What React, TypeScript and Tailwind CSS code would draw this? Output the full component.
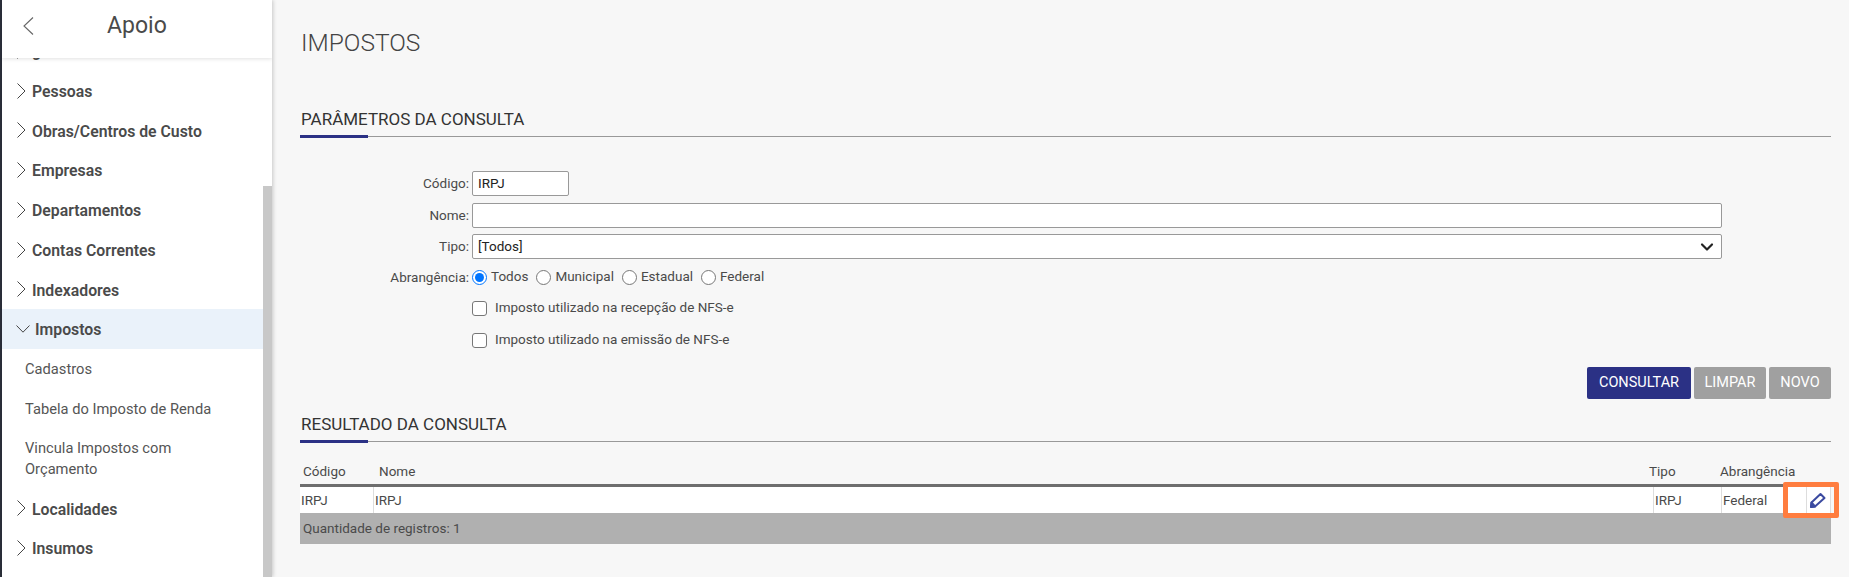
import type { ReactNode } from "react";
import { ChevronDown } from "lucide-react";

const before = ["geral", "Pessoas", "Obras/Centros de Custo", "Empresas", "Departamentos", "Contas Correntes", "Indexadores"];
const children = ["Cadastros", "Tabela do Imposto de Renda"];
const after = ["Localidades", "Insumos"];

function MenuItem({ label }: { label: string }) {
  return (
    <div className="flex h-[39.75px] items-center gap-[6px] pl-[15px] text-[15.8px] font-semibold text-[#4a4a4a]">
      <svg width="9" height="16" viewBox="0 0 9 16" fill="none" stroke="#444" strokeWidth="1" className="shrink-0">
        <path d="M0.5 0.5L8 8L0.5 15.5" />
      </svg>
      <span className="mt-[2px]">{label}</span>
    </div>
  );
}

function SectionTitle({ title }: { title: string }) {
  return (
    <div className="relative border-b border-[#999] pb-[6px]">
      <h2 className="pl-px text-[17px] leading-[22px] text-[#333]">{title}</h2>
      <div className="absolute -bottom-[2px] left-0 h-[3px] w-[68px] bg-[#2b3185]" />
    </div>
  );
}

function Radio({ label, checked }: { label: string; checked?: boolean }) {
  return (
    <label className="flex items-center gap-[4px]">
      <span
        className={
          checked
            ? "flex h-[15px] w-[15px] items-center justify-center rounded-full border border-[#0075ff] bg-white"
            : "h-[15px] w-[15px] rounded-full border border-[#777] bg-white"
        }
      >
        {checked && <span className="h-[9px] w-[9px] rounded-full bg-[#0075ff]" />}
      </span>
      <span className="-mt-[2px]">{label}</span>
    </label>
  );
}

function Check({ label }: { label: string }) {
  return (
    <div className="flex h-[32px] items-center gap-[8px] pl-[172px]">
      <span className="h-[15px] w-[15px] rounded-[3px] border border-[#777] bg-white" />
      <span className="-mt-[2px]">{label}</span>
    </div>
  );
}

const inputClass = "h-[25px] rounded-[2px] border border-[#999] bg-white pl-[5px] leading-[23px] text-[#222]";

function Field({ label, children }: { label: string; children: ReactNode }) {
  return (
    <div className="flex items-center">
      <span className="w-[172px] pr-[3px] text-right">{label}</span>
      {children}
    </div>
  );
}

export default function App() {
  return (
    <div className="flex h-[577px] w-[1849px] overflow-hidden bg-[#f7f7f7] font-['Roboto',sans-serif]">
      <div className="w-[2px] shrink-0 bg-[#2b2f3a]" />

      <aside className="relative z-10 flex w-[270px] shrink-0 flex-col overflow-hidden bg-white shadow-[1px_0_4px_rgba(0,0,0,0.2)]">
        <header className="relative z-10 flex h-[58px] shrink-0 items-center bg-white pl-[21px] shadow-[0_1px_4px_rgba(0,0,0,0.12)]">
          <svg width="11" height="18" viewBox="0 0 11 18" fill="none" stroke="#666" strokeWidth="1.1" className="-mt-[6px]">
            <path d="M10 0.5L1 9L10 17.5" />
          </svg>
          <span className="ml-[73px] -mt-[6px] text-[23px] text-[#4a4a4a]">Apoio</span>
        </header>

        <div className="relative flex flex-1 overflow-hidden">
          <nav className="-mt-[27px] w-[261px] shrink-0">
            {before.map((label) => (
              <MenuItem key={label} label={label} />
            ))}
            <div className="flex h-[39.75px] items-center gap-[5px] bg-[#eaf2fa] pl-[14px] text-[15.8px] font-semibold text-[#4a4a4a]">
              <svg width="14" height="8" viewBox="0 0 14 8" fill="none" stroke="#444" strokeWidth="1" className="shrink-0">
                <path d="M0.5 0.5L7 7.2L13.5 0.5" />
              </svg>
              <span className="mt-[2px]">Impostos</span>
            </div>
            {children.map((label) => (
              <div key={label} className="flex h-[39.75px] items-center pl-[23px] text-[14.7px] text-[#555]">
                {label}
              </div>
            ))}
            <div className="px-[23px] py-[9px] text-[14.7px] leading-[21px] text-[#555]">Vincula Impostos com Orçamento</div>
            {after.map((label) => (
              <MenuItem key={label} label={label} />
            ))}
          </nav>
          <div className="mt-[128px] h-full w-[9px] bg-[#c8c8c8]" />
        </div>
      </aside>

      <main className="min-w-0 flex-1 pl-[28px] pr-[18px] text-[13.5px] text-[#4a4a4a]">
        <h1 className="pl-px pt-[28px] text-[24.5px] leading-[30px] font-light text-[#444]">IMPOSTOS</h1>

        <div className="mt-[50px]">
          <SectionTitle title="PARÂMETROS DA CONSULTA" />
        </div>

        <div className="mt-[34px] flex flex-col gap-[6.5px]">
          <Field label="Código:">
            <div className={`${inputClass} w-[97px]`}>IRPJ</div>
          </Field>
          <Field label="Nome:">
            <div className={`${inputClass} w-[1250px]`} />
          </Field>
          <Field label="Tipo:">
            <div className={`${inputClass} flex w-[1250px] items-center justify-between pr-[4px]`}>
              <span>[Todos]</span>
              <ChevronDown size={20} strokeWidth={2.6} className="text-[#222]" />
            </div>
          </Field>
        </div>

        <div className="mt-[9px] flex h-[18px] items-center">
          <span className="w-[172px] pr-[3px] text-right">Abrangência:</span>
          <div className="flex gap-[8px]">
            <Radio label="Todos" checked />
            <Radio label="Municipal" />
            <Radio label="Estadual" />
            <Radio label="Federal" />
          </div>
        </div>

        <div className="mt-[6px]">
          <Check label="Imposto utilizado na recepção de NFS-e" />
          <Check label="Imposto utilizado na emissão de NFS-e" />
        </div>

        <div className="mt-[11px] flex justify-end gap-[3px] text-[14.5px] text-white">
          <button className="h-[32px] w-[104px] rounded-[2px] bg-[#2b3185]">CONSULTAR</button>
          <button className="h-[32px] w-[72px] rounded-[2px] bg-[#a0a0a0]">LIMPAR</button>
          <button className="h-[32px] w-[62px] rounded-[2px] bg-[#a0a0a0]">NOVO</button>
        </div>

        <div className="mt-[14px]">
          <SectionTitle title="RESULTADO DA CONSULTA" />
        </div>

        <div className="relative mt-[19px]">
          <div className="flex h-[26px] items-center border-b-[3px] border-[#6e6e6e] pb-[2px]">
            <span className="w-[79px] pl-[3px]">Código</span>
            <span className="flex-1">Nome</span>
            <span className="w-[71px]">Tipo</span>
            <span className="w-[111px]">Abrangência</span>
          </div>
          <div className="flex h-[26px] items-center bg-white">
            <span className="w-[74px] border-r border-[#ddd] pl-px leading-[26px]">IRPJ</span>
            <span className="flex-1 border-r border-[#ddd] pl-px leading-[26px]">IRPJ</span>
            <span className="w-[68px] border-r border-[#ddd] pl-px leading-[26px]">IRPJ</span>
            <span className="w-[85px] border-r border-[#ddd] pl-px leading-[26px]">Federal</span>
            <span className="flex h-[26px] w-[24px] items-center border-r border-[#ddd] pl-[2px]">
              <svg width="17" height="17" viewBox="0 0 17 17" fill="none" stroke="#3b4aa0" strokeWidth="2" strokeLinejoin="round">
                <path d="M11.5 2L15.5 6L6 14.5L2 15L2.5 10.5Z" />
                <path d="M2 15L2.5 10.5L6 14.5Z" fill="#3b4aa0" />
              </svg>
            </span>
          </div>
          <div className="flex h-[31px] items-center bg-[#b0b0b0] pl-[3px]">Quantidade de registros: 1</div>
          <div className="absolute top-[21px] -right-[8px] h-[36px] w-[56px] rounded-[2px] border-[5px] border-[#ff7d3f]" />
        </div>
      </main>
    </div>
  );
}
